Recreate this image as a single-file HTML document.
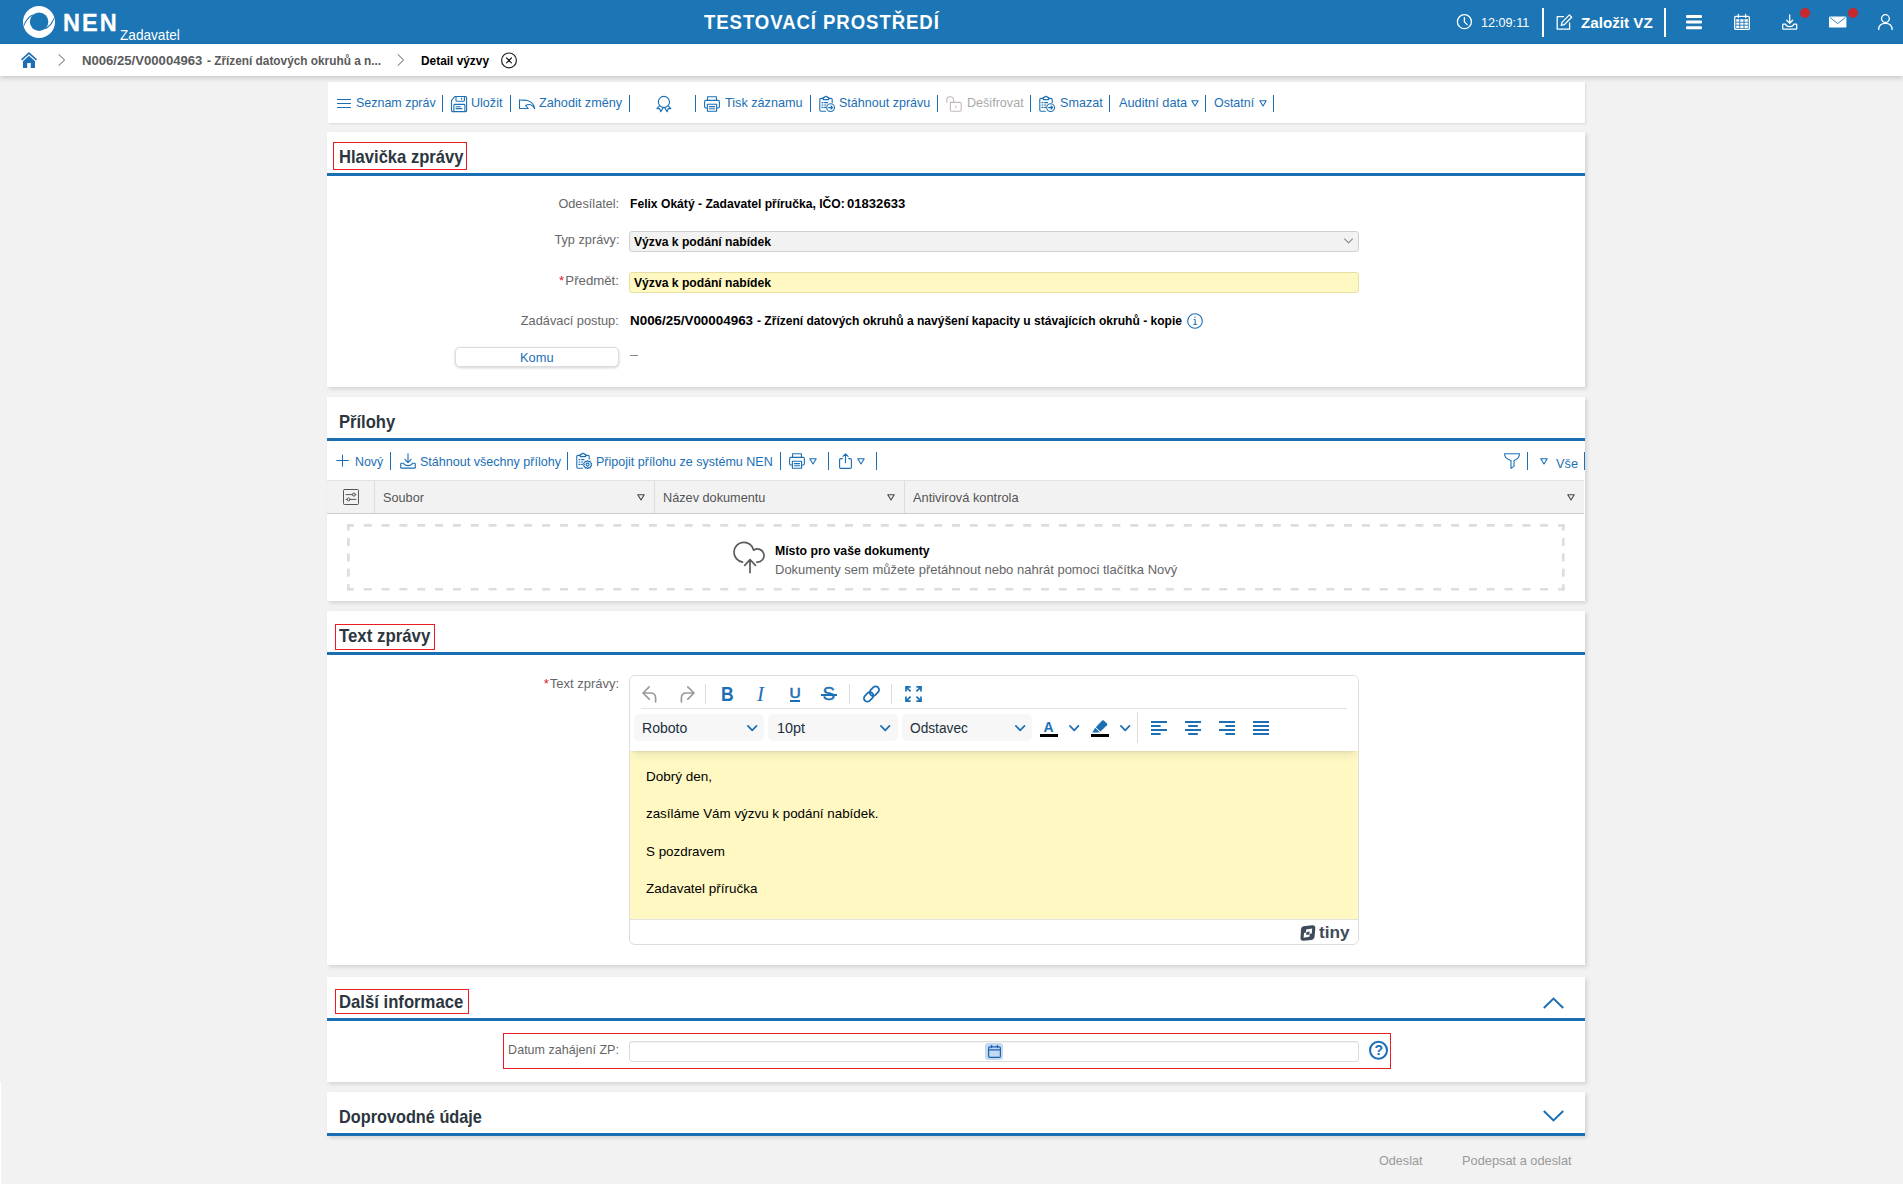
<!DOCTYPE html>
<html lang="cs">
<head>
<meta charset="utf-8">
<title>NEN - Detail výzvy</title>
<style>
*{box-sizing:border-box;margin:0;padding:0}
html,body{width:1903px;height:1184px;overflow:hidden}
body{position:relative;background:#f2f2f2;font-family:"Liberation Sans",sans-serif;font-size:13px;color:#000;line-height:1}
.abs,.t,svg.i{position:absolute}
.t{white-space:nowrap;line-height:16px;height:16px;transform-origin:0 50%;display:block}
.b{font-weight:bold}
.r{transform-origin:100% 50%}
.bl{color:#1b6fb4}
.gr{color:#666}
.lb{color:#666}
.dis{color:#a9a9a9}
.hd{color:#555}
.card{position:absolute;left:327px;width:1258px;background:#fff;box-shadow:2px 2px 4px rgba(0,0,0,.13)}
.line{position:absolute;left:0;width:1258px;height:3px;background:#1a6eb3}
.h{font-size:19px;font-weight:bold;color:#2c3640;line-height:24px;height:24px}
.redbox{position:absolute;border:1px solid #ed1c24}
.sep{position:absolute;width:1px;height:17px;background:#1b6fb4}
svg.i{overflow:visible;fill:none;stroke:#1b6fb4;stroke-width:1.1;stroke-linecap:round;stroke-linejoin:round}
</style>
</head>
<body>
<!-- TOPBAR -->
<div class="abs" id="topbar" style="left:0;top:0;width:1903px;height:44px;background:#1c75b4">
<svg class="i" id="logo" style="left:23px;top:6px" width="32" height="32" viewBox="0 0 32.4 32.4"><circle cx="16.2" cy="16.2" r="16.2" fill="#fff" stroke="none"/><circle cx="16.3" cy="15.9" r="9.4" fill="#1c75b4" stroke="none"/><path d="M10.6 8Q3.2 10.8 0.5 19.9L1 20.5Q4.4 12.8 9 10.2Z" fill="#1c75b4" stroke="none"/><path d="M21.9 23.8Q29.3 21 32 11.9L31.5 11.3Q28.1 19 23.5 21.6Z" fill="#1c75b4" stroke="none"/></svg>
<span class="t b" id="t_nen" style="left:63px;top:11px;font-size:23.5px;line-height:24px;height:24px;color:#fff;letter-spacing:2.1px;-webkit-text-stroke:0.3px #fff">NEN</span>
<span class="t" id="t_zad" style="left:120px;top:26px;font-size:14.5px;line-height:18px;height:18px;color:#fff;transform:scaleX(0.9391)">Zadavatel</span>
<span class="t b" id="t_env" style="left:704px;top:10px;font-size:20.5px;line-height:24px;height:24px;color:#fff;letter-spacing:1px;transform:scaleX(0.9077)">TESTOVACÍ PROSTŘEDÍ</span>
<svg class="i" id="i_clock" style="left:1456px;top:14px;stroke:#fff;stroke-width:1.3" width="17" height="16" viewBox="0 0 17 16"><circle cx="8.4" cy="7.7" r="7"/><path d="M8.4 3.6V7.9L11.2 10.6"/></svg>
<span class="t" id="t_time" style="left:1481px;top:15px;color:#fff;transform:scaleX(0.972)">12:09:11</span>
<div class="abs" style="left:1542px;top:8px;width:2px;height:29px;background:#fff"></div>
<svg class="i" id="i_edit" style="left:1556px;top:14px;stroke:#fff;stroke-width:1.3" width="17" height="16" viewBox="0 0 17 16"><path d="M7.5 2.6H1.2V15.2H13.6V9"/><path d="M13.4 0.9L15.7 3.2L8.2 10.7L5.3 11.4L6 8.4Z"/></svg>
<span class="t b" id="t_zal" style="left:1580.6px;top:14px;font-size:15px;line-height:18px;height:18px;color:#fff;transform:scaleX(1.0127)">Založit VZ</span>
<div class="abs" style="left:1664px;top:8px;width:2px;height:29px;background:#fff"></div>
<div class="abs" style="left:1686px;top:15.4px;width:16px;height:2.3px;background:#fff;border-radius:1px;box-shadow:0 5.6px 0 #fff,0 11.2px 0 #fff"></div>
<svg class="i" id="i_cal" style="left:1734px;top:14px;stroke:#fff;stroke-width:1.3" width="16" height="16" viewBox="0 0 16 16"><rect x="0.7" y="2.4" width="14.6" height="13" rx="1"/><path d="M4.4 0.4V3.6M11.6 0.4V3.6"/><path d="M2.2 5.2H13.8V14H2.2Z" fill="#fff" stroke="none"/><path d="M5.8 5.2V14M10 5.2V14M2.2 8.2H13.8M2.2 11.2H13.8" stroke="#1c75b4" stroke-width="0.9"/></svg>
<svg class="i" id="i_dl" style="left:1782px;top:14px;stroke:#fff;stroke-width:1.3" width="16" height="16" viewBox="0 0 16 16"><path d="M7.7 0.8V9M4.7 6.2L7.7 9.2L10.7 6.2"/><path d="M3.6 10.2H1.4Q0.7 10.2 0.7 10.9V14.4Q0.7 15.1 1.4 15.1H14Q14.7 15.1 14.7 14.4V10.9Q14.7 10.2 14 10.2H11.8Q11.3 12.6 7.7 12.6Q4.1 12.6 3.6 10.2Z"/></svg>
<div class="abs" style="left:1800px;top:8px;width:10px;height:10px;border-radius:50%;background:#c8282b"></div>
<svg class="i" id="i_mail" style="left:1829px;top:16px;stroke:none;fill:#fff" width="18" height="12" viewBox="0 0 18 12"><rect x="0" y="0.4" width="17.4" height="11.2" rx="1.2"/><path d="M1.2 1.6L8.7 7.6L16.2 1.6" fill="none" stroke="#1c75b4" stroke-width="0.9"/></svg>
<div class="abs" style="left:1848px;top:8px;width:10px;height:10px;border-radius:50%;background:#c8282b"></div>
<svg class="i" id="i_user" style="left:1878px;top:14px;stroke:#fff;stroke-width:1.3" width="15" height="16" viewBox="0 0 15 16"><circle cx="7.4" cy="4.6" r="3.9"/><path d="M0.7 15.6C0.7 11.4 3.6 9.4 7.4 9.4C11.2 9.4 14.1 11.4 14.1 15.6"/></svg>
</div>
<!-- BREADCRUMB -->
<div class="abs" id="crumb" style="left:0;top:44px;width:1903px;height:32px;background:#fff;box-shadow:0 2px 5px rgba(0,0,0,.18)">
<svg class="i" id="i_home" style="left:21px;top:8px;stroke:none;fill:#1c6fb5" width="16" height="16" viewBox="0 0 16 16"><path d="M8 0L16 7.2L14.9 8.4L8 2.2L1.1 8.4L0 7.2Z"/><path d="M8 3.8L14 9.2V16H9.8V11H6.2V16H2V9.2Z"/></svg>
<svg class="i" style="left:58px;top:10px;stroke:#555;stroke-width:1" width="8" height="12" viewBox="0 0 8 12"><path d="M1 0.6L6.6 6L1 11.4"/></svg>
<span class="t b" id="t_bc1a" style="left:82px;top:9px;color:#5a5a5a;transform:scaleX(1.0092)">N006/25/V00004963</span><span class="t b" id="t_bc1b" style="left:206.8px;top:9px;color:#5a5a5a;transform:scaleX(0.9094)">- Zřízení datových okruhů a n...</span>
<svg class="i" style="left:397px;top:10px;stroke:#555;stroke-width:1" width="8" height="12" viewBox="0 0 8 12"><path d="M1 0.6L6.6 6L1 11.4"/></svg>
<span class="t b" id="t_bc2" style="left:421px;top:9px;color:#000;transform:scaleX(0.9135)">Detail výzvy</span>
<svg class="i" style="left:501px;top:8px;stroke:#222;stroke-width:1.2" width="16" height="16" viewBox="0 0 16 16"><circle cx="8" cy="8.4" r="7.4"/><path d="M5.6 6L10.4 10.8M10.4 6L5.6 10.8"/></svg>
</div>
<!-- TOOLBAR CARD -->
<div class="abs" id="tb" style="left:327px;top:83px;width:1258px;height:40px">
<div class="abs" style="left:1px;top:-1px;width:1257px;height:41px;background:#fff;box-shadow:1px 1px 2px rgba(0,0,0,.10)"></div>
<svg class="i" style="left:10px;top:13px;stroke-width:1;stroke-linecap:butt" width="14" height="14" viewBox="0 0 14 14"><path d="M0 3.5H14M0 7.5H14M0 11.5H14"/></svg>
<span class="t bl" id="t_tb1" style="left:29px;top:12px;transform:scaleX(0.959)">Seznam zpráv</span>
<div class="sep" style="left:115px;top:11.5px"></div>
<svg class="i" style="left:124.3px;top:12.5px;" width="16" height="16" viewBox="0 0 16 16"><path d="M0.5 4.6L3.8 0.5H14.6Q15.6 0.5 15.6 1.5V14.6Q15.6 15.6 14.6 15.6H1.5Q0.5 15.6 0.5 14.6Z"/><path d="M5 0.6V4.4Q5 5.3 5.9 5.3H12.5Q13.4 5.3 13.4 4.4V0.6M10.6 2V3.3"/><path d="M2.9 15.4V9.3Q2.9 8.4 3.8 8.4H13Q13.9 8.4 13.9 9.3V15.4M5 10.8H9.4M5 12.6H11"/></svg>
<span class="t bl" id="t_tb2" style="left:144.2px;top:12px;transform:scaleX(0.9667)">Uložit</span>
<div class="sep" style="left:183px;top:11.5px"></div>
<svg class="i" style="left:191.8px;top:12.9px;" width="16.3" height="16.3" viewBox="0 0 16.3 16.3"><path d="M0.5 3.8L2.4 4.3C9 3.3 14.5 6 15.7 12.7C13.5 8.6 10 7.6 6.6 9.5L9.2 12.5H0.5Z"/></svg>
<span class="t bl" id="t_tb3" style="left:212.2px;top:12px;transform:scaleX(0.9753)">Zahodit změny</span>
<div class="sep" style="left:302px;top:11.5px"></div>
<svg class="i" style="left:328.6px;top:12.5px;" width="16" height="16" viewBox="0 0 16 16"><circle cx="7.9" cy="6" r="5.6"/><path d="M3.5 9.8L0.9 12.7L3.6 12.5L4.7 15.7L7.2 11.6M12.3 9.8L14.9 12.7L12.2 12.5L11.1 15.7L8.6 11.6"/></svg>
<div class="sep" style="left:368px;top:11.5px"></div>
<svg class="i" style="left:377.3px;top:12.5px;" width="16" height="16" viewBox="0 0 16 16"><path d="M3.6 4.4V0.8H12.4V4.4"/><path d="M3.4 12H2Q0.6 12 0.6 10.6V5.8Q0.6 4.4 2 4.4H14Q15.4 4.4 15.4 5.8V10.6Q15.4 12 14 12H12.6"/><path d="M3.4 8.2H12.6V15.2H3.4ZM5.4 10.6H10.6M5.4 12.8H10.6"/></svg>
<span class="t bl" id="t_tb4" style="left:397.6px;top:12px;transform:scaleX(0.9737)">Tisk záznamu</span>
<div class="sep" style="left:483px;top:11.5px"></div>
<svg class="i" style="left:491.8px;top:12.5px;" width="16" height="16" viewBox="0 0 16 16"><path d="M4 2.4H2Q0.8 2.4 0.8 3.6V14Q0.8 15.2 2 15.2H6.4M10 2.4H12Q13.2 2.4 13.2 3.6V6.4"/><path d="M4.2 3.6V2Q4.2 1.4 5 1.4H5.6Q5.8 0.4 7 0.4Q8.2 0.4 8.4 1.4H9Q9.8 1.4 9.8 2V3.6Z"/><path d="M3 6.6H4M5.6 6.6H8.6M3 9H4M5.6 9H7M3 11.4H4M5.6 11.4H6.6"/><circle cx="11.6" cy="11.6" r="3.9"/><path d="M9.6 11.6H13.4M12 10L13.6 11.6L12 13.2"/></svg>
<span class="t bl" id="t_tb5" style="left:511.8px;top:12px;transform:scaleX(0.9642)">Stáhnout zprávu</span>
<div class="sep" style="left:610.4px;top:11.5px"></div>
<svg class="i" style="left:618.9px;top:12.5px;stroke:#c4b9b9" width="16" height="16" viewBox="0 0 16 16"><path d="M4.4 6.4H14Q15.2 6.4 15.2 7.6V14Q15.2 15.2 14 15.2H5.6Q4.4 15.2 4.4 14Z"/><path d="M0.8 6.4V4.4Q0.8 0.8 4.2 0.8Q7.6 0.8 7.6 4.4V6.4"/><path d="M9.8 10V11.6"/></svg>
<span class="t dis" id="t_tb6" style="left:639.5px;top:12px;transform:scaleX(0.9678)">Dešifrovat</span>
<div class="sep" style="left:703px;top:11.5px"></div>
<svg class="i" style="left:712.3px;top:12.5px;" width="16" height="16" viewBox="0 0 16 16"><path d="M4 2.4H2Q0.8 2.4 0.8 3.6V14Q0.8 15.2 2 15.2H6.4M10 2.4H12Q13.2 2.4 13.2 3.6V6.4"/><path d="M4.2 3.6V2Q4.2 1.4 5 1.4H5.6Q5.8 0.4 7 0.4Q8.2 0.4 8.4 1.4H9Q9.8 1.4 9.8 2V3.6Z"/><path d="M3 6.6H4M5.6 6.6H8.6M3 9H4M5.6 9H7M3 11.4H4M5.6 11.4H6.6"/><circle cx="11.6" cy="11.6" r="3.9"/><path d="M9.6 11.6H13.4M12 10L13.6 11.6L12 13.2"/></svg>
<span class="t bl" id="t_tb7" style="left:732.7px;top:12px;transform:scaleX(0.9682)">Smazat</span>
<div class="sep" style="left:782px;top:11.5px"></div>
<span class="t bl" id="t_tb8" style="left:791.6px;top:12px;transform:scaleX(0.9826)">Auditní data</span>
<svg class="i" style="left:863.6px;top:16.8px;" width="8" height="7" viewBox="0 0 8 7"><path d="M0.8 0.8H7.2L4 6Z"/></svg>
<div class="sep" style="left:878px;top:11.5px"></div>
<span class="t bl" id="t_tb9" style="left:887.4px;top:12px;transform:scaleX(0.9571)">Ostatní</span>
<svg class="i" style="left:931.8px;top:16.8px;" width="8" height="7" viewBox="0 0 8 7"><path d="M0.8 0.8H7.2L4 6Z"/></svg>
<div class="sep" style="left:946px;top:11.5px"></div>
</div>
<!-- CARD 1 -->
<div class="card" id="c1" style="top:132px;height:255px">
<div class="redbox" style="left:6px;top:10px;width:134px;height:28px"></div>
<span class="t h" id="t_h1" style="left:11.5px;top:12.6px;transform:scaleX(0.8727)">Hlavička zprávy</span>
<div class="line" style="top:41px"></div>
<span class="t r lb" id="t_l1" style="right:965.8px;top:63.6px;transform:scaleX(0.9774)">Odesílatel:</span>
<span class="t b" id="t_v1a" style="left:302.5px;top:63.6px;transform:scaleX(0.9317)">Felix Okátý - Zadavatel příručka, IČO:</span><span class="t b" id="t_v1b" style="left:519.8px;top:63.6px;transform:scaleX(1.0069)">01832633</span>
<span class="t r lb" id="t_l2" style="right:965.8px;top:99.5px;transform:scaleX(0.9788)">Typ zprávy:</span>
<div class="abs" style="left:302px;top:99px;width:730px;height:21px;background:#f2f2f2;border:1px solid #cfcfcf;border-radius:3px"></div>
<span class="t b" id="t_v2" style="left:306.8px;top:102.4px;transform:scaleX(0.934)">Výzva k podání nabídek</span>
<svg class="i" style="left:1017px;top:106.4px;stroke:#888;stroke-width:1.1" width="9" height="6" viewBox="0 0 9 6"><path d="M0.6 0.8L4.5 4.8L8.4 0.8"/></svg>
<span class="t r lb" id="t_l3" style="right:965.8px;top:141.4px;transform:scaleX(1.0153)"><span style="color:#d9232e">*</span>&#8202;Předmět:</span>
<div class="abs" style="left:302px;top:140px;width:730px;height:21px;background:#fff8c2;border:1px solid #e6dfa4;border-radius:3px"></div>
<span class="t b" id="t_v3" style="left:306.8px;top:143.3px;transform:scaleX(0.934)">Výzva k podání nabídek</span>
<span class="t r lb" id="t_l4" style="right:965.8px;top:180.5px;transform:scaleX(0.982)">Zadávací postup:</span>
<span class="t b" id="t_v4a" style="left:302.5px;top:180.5px;transform:scaleX(1.0319)">N006/25/V00004963</span><span class="t b" id="t_v4b" style="left:430px;top:180.5px;transform:scaleX(0.9264)">- Zřízení datových okruhů a navýšení kapacity u stávajících okruhů - kopie</span>
<svg class="i" style="left:860px;top:181px;stroke-width:1.1" width="16" height="16" viewBox="0 0 16 16"><circle cx="8" cy="8" r="7.3"/><path d="M7 6.6H8.2V11.2M6.8 11.4H9.6" stroke-width="1"/><circle cx="8" cy="4.3" r="0.7" fill="#1b6fb4" stroke="none"/></svg>
<div class="abs" style="left:127.5px;top:215.3px;width:164px;height:20px;background:#fff;border:1px solid #dcdcdc;border-radius:5px;box-shadow:0 1px 3px rgba(0,0,0,.18)"></div>
<span class="t bl" id="t_komu" style="left:193.2px;top:218.4px;transform:scaleX(0.9882)">Komu</span>
<div class="abs" style="left:302.6px;top:223.2px;width:8.4px;height:1px;background:#8a8a8a"></div>
</div>
<!-- CARD 2 -->
<div class="card" id="c2" style="top:397px;height:204px">
<span class="t h" id="t_h2" style="left:11.5px;top:12.6px;transform:scaleX(0.8719)">Přílohy</span>
<div class="line" style="top:41px"></div>
<svg class="i" style="left:9px;top:57px;stroke-width:1;stroke-linecap:butt" width="13" height="13" viewBox="0 0 13 13"><path d="M6.5 0.6V12.8M0.3 6.5H12.8"/></svg>
<span class="t bl" id="t_a1" style="left:28.2px;top:57.0px;transform:scaleX(0.95)">Nový</span>
<div class="sep" style="height:18px;left:63px;top:55.3px"></div>
<svg class="i" style="left:72.6px;top:56.2px;" width="16" height="16" viewBox="0 0 16 16"><path d="M8 0.8V9.4M4.8 6.4L8 9.6L11.2 6.4"/><path d="M3.6 10.2H1.4Q0.7 10.2 0.7 10.9V14.4Q0.7 15.1 1.4 15.1H14.6Q15.3 15.1 15.3 14.4V10.9Q15.3 10.2 14.6 10.2H12.4Q11.8 12.6 8 12.6Q4.2 12.6 3.6 10.2Z"/></svg>
<span class="t bl" id="t_a2" style="left:92.6px;top:57.0px;transform:scaleX(0.9658)">Stáhnout všechny přílohy</span>
<div class="sep" style="height:18px;left:240.4px;top:55.3px"></div>
<svg class="i" style="left:248.8px;top:56.2px;" width="16" height="16" viewBox="0 0 16 16"><path d="M4 2.4H2Q0.8 2.4 0.8 3.6V14Q0.8 15.2 2 15.2H6.4M10 2.4H12Q13.2 2.4 13.2 3.6V6"/><path d="M4.2 3.6V2Q4.2 1.4 5 1.4H5.6Q5.8 0.4 7 0.4Q8.2 0.4 8.4 1.4H9Q9.8 1.4 9.8 2V3.6Z"/><path d="M3 6.6H4M5.6 6.6H8M3 9H4M5.6 9H6.6M3 11.4H4M5.6 11.4H6.4"/><circle cx="11.6" cy="11.6" r="1.5"/><path d="M11.6 7.6L12.6 8.6L14 8.2L14.4 9.6L15.6 10.4L15 11.6L15.6 12.8L14.4 13.6L14 15L12.6 14.6L11.6 15.6L10.6 14.6L9.2 15L8.8 13.6L7.6 12.8L8.2 11.6L7.6 10.4L8.8 9.6L9.2 8.2L10.6 8.6Z"/></svg>
<span class="t bl" id="t_a3" style="left:269.4px;top:57.0px;transform:scaleX(0.963)">Připojit přílohu ze systému NEN</span>
<div class="sep" style="height:18px;left:453.4px;top:55.3px"></div>
<svg class="i" style="left:462.2px;top:56.4px;" width="16" height="16" viewBox="0 0 16 16"><path d="M3.6 4.4V0.8H12.4V4.4"/><path d="M3.4 12H2Q0.6 12 0.6 10.6V5.8Q0.6 4.4 2 4.4H14Q15.4 4.4 15.4 5.8V10.6Q15.4 12 14 12H12.6"/><path d="M3.4 8.2H12.6V15.2H3.4ZM5.4 10.6H10.6M5.4 12.8H10.6"/></svg>
<svg class="i" style="left:481.9px;top:61px;" width="8" height="7" viewBox="0 0 8 7"><path d="M0.8 0.8H7.2L4 6Z"/></svg>
<div class="sep" style="height:18px;left:501.4px;top:55.3px"></div>
<svg class="i" style="left:511px;top:56px;" width="15" height="16" viewBox="0 0 15 16"><path d="M4.4 5.6H2.8Q1.6 5.6 1.6 6.8V14.2Q1.6 15.4 2.8 15.4H12.2Q13.4 15.4 13.4 14.2V6.8Q13.4 5.6 12.2 5.6H10.6"/><path d="M7.5 9.6V0.8M4.9 3.4L7.5 0.8L10.1 3.4"/></svg>
<svg class="i" style="left:530.2px;top:61px;" width="8" height="7" viewBox="0 0 8 7"><path d="M0.8 0.8H7.2L4 6Z"/></svg>
<div class="sep" style="height:18px;left:549.4px;top:55.3px"></div>
<svg class="i" style="left:1177px;top:56.2px" width="16" height="16" viewBox="0 0 16 16"><path d="M0.6 0.7H15.4Q15.6 5.4 10 7.6V13.4L7 15.4V7.6Q0.4 5.4 0.6 0.7Z"/></svg>
<div class="sep" style="height:18px;left:1200.2px;top:55.3px"></div>
<svg class="i" style="left:1212.8px;top:60.6px;" width="8" height="7" viewBox="0 0 8 7"><path d="M0.8 0.8H7.2L4 6Z"/></svg>
<span class="t bl" id="t_a4" style="left:1228.8px;top:59.2px;transform:scaleX(0.9818)">Vše</span>
<div class="sep" style="height:18px;left:1257px;top:55.3px"></div>
<div class="abs" style="left:0;top:83px;width:1257px;height:34px;background:#f2f2f2;border-top:1px solid #e2e2e2;border-bottom:1px solid #cdcdcd"></div>
<div class="abs" style="left:47px;top:84px;width:1px;height:32px;background:#dcdcdc"></div>
<div class="abs" style="left:327px;top:84px;width:1px;height:32px;background:#dcdcdc"></div>
<div class="abs" style="left:577px;top:84px;width:1px;height:32px;background:#dcdcdc"></div>
<svg class="i" style="left:16px;top:92px;stroke:#555;stroke-width:1" width="16" height="16" viewBox="0 0 16 16"><rect x="0.5" y="0.5" width="15" height="15" rx="0.9"/><path d="M3 5.6H9.4M12.4 5.6H13M3 10.4H4M7 10.4H13"/><circle cx="10.9" cy="5.6" r="1.5"/><circle cx="5.5" cy="10.4" r="1.5"/></svg>
<span class="t hd" id="t_g1" style="left:56px;top:93.4px;transform:scaleX(0.9762)">Soubor</span>
<svg class="i" style="left:309.8px;top:97px;stroke:#444" width="8" height="7" viewBox="0 0 8 7"><path d="M0.8 0.8H7.2L4 6Z"/></svg>
<span class="t hd" id="t_g2" style="left:336.2px;top:93.4px;transform:scaleX(0.9771)">Název dokumentu</span>
<svg class="i" style="left:559.8px;top:97px;stroke:#444" width="8" height="7" viewBox="0 0 8 7"><path d="M0.8 0.8H7.2L4 6Z"/></svg>
<span class="t hd" id="t_g3" style="left:586px;top:93.4px;transform:scaleX(0.9869)">Antivirová kontrola</span>
<svg class="i" style="left:1240px;top:97px;stroke:#444" width="8" height="7" viewBox="0 0 8 7"><path d="M0.8 0.8H7.2L4 6Z"/></svg>
<svg class="i" style="left:20.1px;top:127.2px;stroke:#dcdde1;stroke-width:2.7;stroke-linecap:butt" width="1217.7" height="66.6" viewBox="0 0 1217.7 66.6"><path d="M0 1.35H1217.7M0 65.25H1217.7" stroke-dasharray="8 9.826" stroke-dashoffset="1.1"/><path d="M1.35 0V66.6M1216.35 0V66.6" stroke-dasharray="8 7.45" stroke-dashoffset="1.5"/></svg>
<svg class="i" style="left:401px;top:139px;stroke:#5c5c5c;stroke-width:1.7" width="44" height="42" viewBox="0 0 44 42"><path d="M14.55 26.1A9.95 9.95 0 1 1 25.7 14.2A6.56 6.56 0 1 1 28.9 26.1"/><path d="M22 36.6V23.8M16.7 29.3L22 23.7L27.5 29.3"/></svg>
<span class="t b" id="t_d1" style="left:448.4px;top:145.7px;transform:scaleX(0.9427)">Místo pro vaše dokumenty</span>
<span class="t lb" id="t_d2" style="left:448.4px;top:165.0px;transform:scaleX(0.9995)">Dokumenty sem můžete přetáhnout nebo nahrát pomoci tlačítka Nový</span>
</div>
<!-- CARD 3 -->
<div class="card" id="c3" style="top:611px;height:354px">
<div class="redbox" style="left:7.8px;top:13.2px;width:100.4px;height:25.4px"></div>
<span class="t h" id="t_h3" style="left:11.5px;top:12.6px;transform:scaleX(0.8845)">Text zprávy</span>
<div class="line" style="top:41px"></div>
<span class="t r lb" id="t_l5" style="right:965.8px;top:65px;transform:scaleX(1.0)"><span style="color:#d9232e">*</span>&#8202;Text zprávy:</span>
<div class="abs" id="ed" style="left:302px;top:64px;width:730px;height:270px;border:1px solid #dedede;border-radius:6px;background:#fff;overflow:hidden">
<div class="abs" style="left:0;top:75px;width:728px;height:168.3px;background:#fff8c2"></div>
<div class="abs" style="left:0;top:0;width:728px;height:75px;background:#fff;box-shadow:0 2px 2px -2px rgba(34,47,62,.18),0 8px 8px -4px rgba(34,47,62,.10)"></div>
<div class="abs" style="left:0;top:243.2px;width:728px;height:1px;background:#e3e3e3"></div>
<div class="abs" style="left:11px;top:32.2px;width:706px;height:1px;background:#e3e3e3"></div>
<svg class="i" style="left:12px;top:9.6px;stroke:#9a9a9a;stroke-width:1.7" width="17" height="17" viewBox="0 0 17 17"><path d="M7.2 0.9L1 7L7.2 13.1M1.2 7H8.6Q13.6 7 13.6 12V15.8"/></svg>
<svg class="i" style="left:47.6px;top:9.6px;stroke:#9a9a9a;stroke-width:1.7" width="17" height="17" viewBox="0 0 17 17"><path d="M9.8 0.9L16 7L9.8 13.1M15.8 7H8.4Q3.4 7 3.4 12V15.8"/></svg>
<div class="abs" style="left:74.8px;top:8px;width:1px;height:20px;background:#dcdcdc"></div>
<div class="abs" style="left:219.0px;top:8px;width:1px;height:20px;background:#dcdcdc"></div>
<div class="abs" style="left:261.0px;top:8px;width:1px;height:20px;background:#dcdcdc"></div>
<span class="t b" id="t_B" style="left:91px;top:7px;font-size:19.5px;line-height:22px;height:22px;color:#1b6fb4;transform:scaleX(.9)">B</span>
<span class="t" id="t_I" style="left:127px;top:7px;font-family:'Liberation Serif',serif;font-style:italic;font-size:21px;line-height:22px;height:22px;color:#1b6fb4">I</span>
<span class="t" id="t_U" style="left:159.4px;top:8.4px;font-size:15.5px;line-height:18px;height:18px;color:#1b6fb4;-webkit-text-stroke:0.6px #1b6fb4">U</span>
<div class="abs" style="left:159.8px;top:23.6px;width:10.4px;height:2px;background:#1b6fb4"></div>
<span class="t" id="t_S" style="left:192.6px;top:7px;font-size:19px;line-height:22px;height:22px;color:#1b6fb4;-webkit-text-stroke:0.4px #1b6fb4">S</span>
<div class="abs" style="left:191.3px;top:17.6px;width:15.6px;height:2px;background:#1b6fb4"></div>
<svg class="i" style="left:231.5px;top:9px;stroke-width:1.8" width="19" height="18" viewBox="0 0 19 18"><g transform="rotate(-45 9.5 9)"><rect x="0.2" y="5.6" width="10.4" height="6.8" rx="3.4"/><rect x="8.4" y="5.6" width="10.4" height="6.8" rx="3.4"/></g></svg>
<svg class="i" style="left:274.8px;top:10.2px;stroke-width:1.7;stroke-linecap:butt;stroke-linejoin:miter" width="17" height="16" viewBox="0 0 17 16"><path d="M1 5.4V0.9H5.6M1.4 1.3L5.6 5.4M16 5.4V0.9H11.4M15.6 1.3L11.4 5.4M1 10.6V15.1H5.6M1.4 14.7L5.6 10.6M16 10.6V15.1H11.4M15.6 14.7L11.4 10.6"/></svg>
<div class="abs" style="left:4.3px;top:37.8px;width:129.5px;height:27px;background:#f7f7f7;border-radius:5px"></div><span class="t" id="t_dd1" style="left:12.4px;top:43px;font-size:14px;line-height:18px;height:18px;color:#222f3e;transform:scaleX(1.0044)">Roboto</span><svg class="i" style="left:116.6px;top:48.6px;stroke-width:1.7" width="11" height="7" viewBox="0 0 11 7"><path d="M0.9 0.9L5.2 5.3L9.5 0.9"/></svg>
<div class="abs" style="left:138px;top:37.8px;width:129.8px;height:27px;background:#f7f7f7;border-radius:5px"></div><span class="t" id="t_dd2" style="left:146.6px;top:43px;font-size:14px;line-height:18px;height:18px;color:#222f3e;transform:scaleX(1.0296)">10pt</span><svg class="i" style="left:250.4px;top:48.6px;stroke-width:1.7" width="11" height="7" viewBox="0 0 11 7"><path d="M0.9 0.9L5.2 5.3L9.5 0.9"/></svg>
<div class="abs" style="left:271.8px;top:37.8px;width:130.1px;height:27px;background:#f7f7f7;border-radius:5px"></div><span class="t" id="t_dd3" style="left:279.8px;top:43px;font-size:14px;line-height:18px;height:18px;color:#222f3e;transform:scaleX(0.978)">Odstavec</span><svg class="i" style="left:384.6px;top:48.6px;stroke-width:1.7" width="11" height="7" viewBox="0 0 11 7"><path d="M0.9 0.9L5.2 5.3L9.5 0.9"/></svg>
<span class="t" id="t_A" style="left:413.6px;top:42.6px;font-size:14px;line-height:16px;height:16px;color:#1b6fb4;font-weight:bold">A</span>
<div class="abs" style="left:409.9px;top:58px;width:18.5px;height:2.8px;background:#000"></div>
<svg class="i" style="left:438.6px;top:48.6px;stroke-width:1.7" width="11" height="7" viewBox="0 0 11 7"><path d="M0.9 0.9L5.2 5.3L9.5 0.9"/></svg>
<svg class="i" style="left:461.5px;top:43.6px;" width="16" height="13" viewBox="0 0 16 13"><path d="M10.2 0.6Q11 -0.1 11.8 0.6L15 3.6Q15.7 4.4 15 5.2L8.4 11.6L3.8 7.2Z" fill="#1b6fb4" stroke="none"/><path d="M3.2 7.8L7.8 12.2L5.6 12.6H0.4Z" fill="#1b6fb4" stroke="none"/></svg>
<div class="abs" style="left:461px;top:58px;width:18.2px;height:2.8px;background:#000"></div>
<svg class="i" style="left:489.6px;top:48.6px;stroke-width:1.7" width="11" height="7" viewBox="0 0 11 7"><path d="M0.9 0.9L5.2 5.3L9.5 0.9"/></svg>
<div class="abs" style="left:507px;top:36px;width:1px;height:31px;background:#dcdcdc"></div>
<svg class="i" style="left:521.2px;top:45px;stroke-width:2;stroke-linecap:butt" width="16" height="14" viewBox="0 0 16 14"><path d="M0 1H16M0 5H9.6M0 9H16M0 13H9.6"/></svg>
<svg class="i" style="left:555px;top:45px;stroke-width:2;stroke-linecap:butt" width="16" height="14" viewBox="0 0 16 14"><path d="M0 1H16M3.2 5H12.8M0 9H16M3.2 13H12.8"/></svg>
<svg class="i" style="left:589px;top:45px;stroke-width:2;stroke-linecap:butt" width="16" height="14" viewBox="0 0 16 14"><path d="M0 1H16M6.4 5H16.0M0 9H16M6.4 13H16.0"/></svg>
<svg class="i" style="left:623.2px;top:45px;stroke-width:2;stroke-linecap:butt" width="16" height="14" viewBox="0 0 16 14"><path d="M0 1H16M0 5H16M0 9H16M0 13H16"/></svg>
<span class="t" id="t_e1" style="left:16.4px;top:93px;font-size:13.33px;color:#000;transform:scaleX(1.0138)">Dobrý den,</span>
<span class="t" id="t_e2" style="left:16.4px;top:130px;font-size:13.33px;color:#000;transform:scaleX(1.003)">zasíláme Vám výzvu k podání nabídek.</span>
<span class="t" id="t_e3" style="left:16.4px;top:168px;font-size:13.33px;color:#000;transform:scaleX(1.0038)">S pozdravem</span>
<span class="t" id="t_e4" style="left:16.4px;top:205px;font-size:13.33px;color:#000;transform:scaleX(1.0091)">Zadavatel příručka</span>
<svg class="i" style="left:670px;top:249px;" width="16" height="16" viewBox="0 0 16 16"><path d="M3.4 1.2L12 0.3Q15.6 0 15.3 3.6L14.6 11.6Q14.3 14.6 11.4 15L3.6 15.8Q0.2 16 0.5 12.6L1 4.2Q1.2 1.5 3.4 1.2Z" fill="#3f4b5b" stroke="none"/><path d="M6 4.6L12.2 3.4L11.8 8.4L9.8 8.8L9.4 11.8L3.6 12.8L4 8L6 7.6Z" fill="#fff" stroke="none"/><path d="M6.4 7.2L9.6 6.6L9.4 9.4L6.2 10Z" fill="#3f4b5b" stroke="none"/></svg>
<span class="t b" id="t_tiny" style="left:688.6px;top:247.4px;font-size:17px;line-height:20px;height:20px;color:#3f4b5b;transform:scaleX(1.0133)">tiny</span>
</div>
</div>
<!-- CARD 4 -->
<div class="card" id="c4" style="top:977px;height:105px">
<div class="redbox" style="left:7.8px;top:12.2px;width:134.4px;height:24.8px"></div>
<span class="t h" id="t_h4" style="left:11.5px;top:12.6px;transform:scaleX(0.8782)">Další informace</span>
<div class="line" style="top:41px"></div>
<svg class="i" style="left:1216px;top:20px;stroke-width:2;stroke-linecap:butt;stroke-linejoin:miter" width="22" height="12" viewBox="0 0 22 12"><path d="M0.8 11L10.5 1.6L20.2 11"/></svg>
<div class="redbox" style="left:176px;top:56px;width:888px;height:36px"></div>
<span class="t r lb" id="t_l6" style="right:965.8px;top:65px;transform:scaleX(0.9643)">Datum zahájení ZP:</span>
<div class="abs" style="left:302px;top:64px;width:730px;height:21px;background:#fff;border:1px solid #dcdcdc;border-radius:3px;box-shadow:inset 0 1px 1px rgba(0,0,0,.05)"></div>
<div class="abs" style="left:658.4px;top:65.6px;width:17.6px;height:17px;background:#c5daf0;border-radius:3px"></div>
<svg class="i" style="left:660.7px;top:67.5px;stroke:#1b62b0;stroke-width:1.2" width="13" height="13" viewBox="0 0 13 13"><rect x="0.6" y="1.8" width="11.8" height="10.6" rx="1.2"/><path d="M0.6 4.9H12.4M3.6 0.4V2.6M9.4 0.4V2.6"/></svg>
<svg class="i" style="left:1041.4px;top:62.8px;stroke-width:2" width="20" height="20" viewBox="0 0 20 20"><circle cx="10.5" cy="10.2" r="8.5"/></svg>
<span class="t b bl" id="t_q" style="left:1047.4px;top:64.8px;font-size:14px;line-height:16px">?</span>
</div>
<!-- CARD 5 -->
<div class="card" id="c5" style="top:1092px;height:44px">
<span class="t h" id="t_h5" style="left:11.5px;top:12.6px;transform:scaleX(0.8569)">Doprovodné údaje</span>
<div class="line" style="top:41px"></div>
<svg class="i" style="left:1216px;top:18px;stroke-width:2;stroke-linecap:butt;stroke-linejoin:miter" width="22" height="12" viewBox="0 0 22 12"><path d="M0.8 1L10.5 10.4L20.2 1"/></svg>
</div>
<!-- FOOTER -->
<span class="t" id="t_f1" style="left:1379.2px;top:1153px;color:#9a9a9a;transform:scaleX(0.9711)">Odeslat</span>
<span class="t" id="t_f2" style="left:1462.3px;top:1153px;color:#9a9a9a;transform:scaleX(0.9847)">Podepsat a odeslat</span>
<div class="abs" style="left:0;top:1082px;width:1px;height:102px;background:#fff"></div>
</body>
</html>
